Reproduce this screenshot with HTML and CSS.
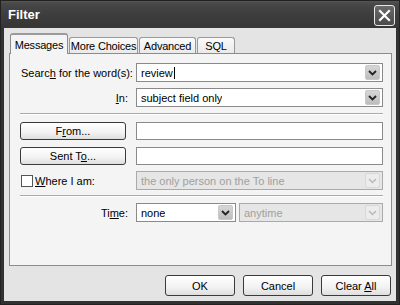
FILE: index.html
```html
<!DOCTYPE html>
<html>
<head>
<meta charset="utf-8">
<link rel="stylesheet" href="styles.css">
</head>
<body>
<div class="window">
  <div class="titlebar">
    <span class="title">Filter</span>
    <span class="close"><svg width="13" height="13" viewBox="0 0 13 13"><path d="M2 2 L11 11 M11 2 L2 11" stroke="#fff" stroke-width="2.2" stroke-linecap="square"/></svg></span>
  </div>
  <div class="client">
    <div class="tabs">
      <div class="tab active t1">Messages</div>
      <div class="tab t2">More Choices</div>
      <div class="tab t3">Advanced</div>
      <div class="tab t4">SQL</div>
    </div>
    <div class="panel">
      <div class="row r1">
        <label class="lbl left">Searc<u>h</u> for the word(s):</label>
        <div class="combo wide"><span class="val">review<span class="caret"></span></span><span class="dd"><svg width="9" height="6" viewBox="0 0 9 6"><path d="M1 1 L4.5 4.5 L8 1" fill="none" stroke="#222" stroke-width="1.8"/></svg></span></div>
      </div>
      <div class="row r2">
        <label class="lbl"><u>I</u>n:</label>
        <div class="combo wide"><span class="val">subject field only</span><span class="dd"><svg width="9" height="6" viewBox="0 0 9 6"><path d="M1 1 L4.5 4.5 L8 1" fill="none" stroke="#222" stroke-width="1.8"/></svg></span></div>
      </div>
      <div class="sep s1"></div>
      <div class="row r3">
        <div class="btncol"><button class="btn small">F<u>r</u>om...</button></div>
        <div class="field"></div>
      </div>
      <div class="row r4">
        <div class="btncol"><button class="btn small">Sent T<u>o</u>...</button></div>
        <div class="field"></div>
      </div>
      <div class="row r5">
        <label class="lbl left chk"><span class="box"></span><span><u>W</u>here I am:</span></label>
        <div class="combo wide disabled"><span class="val">the only person on the To line</span><span class="dd"><svg width="9" height="6" viewBox="0 0 9 6"><path d="M1 1 L4.5 4.5 L8 1" fill="none" stroke="#b8b8b8" stroke-width="1.5"/></svg></span></div>
      </div>
      <div class="sep s2"></div>
      <div class="row r6">
        <label class="lbl">Ti<u>m</u>e:</label>
        <div class="combo narrow"><span class="val">none</span><span class="dd"><svg width="9" height="6" viewBox="0 0 9 6"><path d="M1 1 L4.5 4.5 L8 1" fill="none" stroke="#222" stroke-width="1.8"/></svg></span></div>
        <div class="combo rest disabled"><span class="val">anytime</span><span class="dd"><svg width="9" height="6" viewBox="0 0 9 6"><path d="M1 1 L4.5 4.5 L8 1" fill="none" stroke="#b8b8b8" stroke-width="1.5"/></svg></span></div>
      </div>
    </div>
    <div class="buttons">
      <button class="btn dlg">OK</button>
      <button class="btn dlg">Cancel</button>
      <button class="btn dlg">Clear <u>A</u>ll</button>
    </div>
  </div>
</div>
</body>
</html>
```
FILE: styles.css
```css
* { box-sizing: border-box; }
html, body { margin: 0; padding: 0; background: #2c2c2c; }
body { font-family: "Liberation Sans", Arial, sans-serif; font-size: 11px; color: #000; }
.window {
  width: 400px; height: 305px;
  background: #323232;
  display: flex; flex-direction: column;
  border: 1px solid #222;
}
.titlebar {
  height: 27px;
  background: linear-gradient(#555 0, #474747 3px, #3d3d3d 14px, #363636 26px);
  display: flex; align-items: center; justify-content: space-between;
  padding: 0 4px 0 7px;
}
.title { color: #fff; font-weight: bold; font-size: 13px; }
.close {
  width: 21px; height: 21px; margin-top: 2px;
  border: 1px solid #e8e8e8; border-radius: 3px;
  background: linear-gradient(#6a6a6a, #4a4a4a);
  display: flex; align-items: center; justify-content: center;
}
.client {
  flex: 1;
  margin: 0 3px 3px 3px;
  background: #e4e4e4;
  padding: 5px 4px 0 5px;
  display: flex; flex-direction: column;
}
.tabs { display: flex; align-items: flex-end; height: 20px; padding-left: 1px; position: relative; z-index: 1; }
.tab {
  height: 16px;
  border: 1px solid #999; border-bottom: none;
  border-radius: 3px 3px 0 0;
  background: linear-gradient(#fafafa, #eaeaea);
  display: flex; align-items: center; justify-content: center;
  margin-right: 1px;
  font-size: 11px; white-space: nowrap; letter-spacing: -0.2px;
}
.tab.active {
  background: #f4f4f4;
  border-color: #8c8c8c;
  border-top: 2px solid #9a9a9a;
  margin-bottom: -1px; height: 21px;
}
.t1 { width: 58px; }
.t2 { width: 69px; }
.t3 { width: 57px; }
.t4 { width: 38px; }
.panel {
  height: 213px;
  background: #f4f4f4;
  border: 1px solid #8c8c8c;
  padding: 0 8px 0 10px;
  display: flex; flex-direction: column;
}
.row { display: flex; align-items: center; }
.r1 { margin-top: 9px; height: 19px; }
.r2 { margin-top: 6px; height: 19px; }
.s1 { margin-top: 6px; }
.r3 { margin-top: 7px; height: 18px; }
.r4 { margin-top: 7px; height: 18px; }
.r5 { margin-top: 6px; height: 19px; }
.s2 { margin-top: 5px; }
.r6 { margin-top: 6px; height: 19px; }
.sep { height: 2px; border-top: 1px solid #aaa; border-bottom: 1px solid #fff; }
.lbl { width: 108px; margin-right: 8px; text-align: right; white-space: nowrap; }
.lbl.left { text-align: left; padding-left: 1px; }
.chk { display: flex; align-items: center; padding-left: 0; }
.box { width: 12px; height: 12px; border: 1px solid #555; background: #fff; margin-right: 2px; }
.btncol { width: 116px; }
.combo {
  height: 19px; border: 1px solid #8a8a8a; background: #fff;
  display: flex; align-items: center; justify-content: space-between;
  padding: 0 2px 0 4px;
}
.combo.wide { width: 247px; }
.combo.narrow { width: 100px; margin-right: 3px; }
.combo.rest { width: 144px; }
.combo .val { white-space: nowrap; overflow: hidden; display: flex; align-items: center; }
.caret { display: inline-block; width: 1px; height: 12px; background: #000; margin-left: 1px; }
.dd {
  width: 15px; height: 15px; border-radius: 2px;
  background: linear-gradient(#d6d6d6, #bdbdbd);
  border: 1px solid #c8c8c8;
  display: flex; align-items: center; justify-content: center;
}
.combo.disabled { background: #e6e6e6; border-color: #aaa; color: #a0a0a0; }
.combo.disabled .dd { background: #ececec; border-color: #d8d8d8; }
.field { width: 247px; height: 18px; border: 1px solid #8a8a8a; background: #fff; }
.btn {
  font-family: "Liberation Sans", Arial, sans-serif; font-size: 11px; color: #000;
  border: 1px solid #3a3a3a; border-radius: 3px;
  background: linear-gradient(#ffffff, #f2f2f2 60%, #dedede);
  padding: 0; margin: 0;
}
.btn.small { width: 106px; height: 18px; }
.buttons { display: flex; justify-content: flex-end; gap: 8px; margin-top: 9px; padding-right: 1px; }
.btn.dlg { width: 70px; height: 21px; }
```
